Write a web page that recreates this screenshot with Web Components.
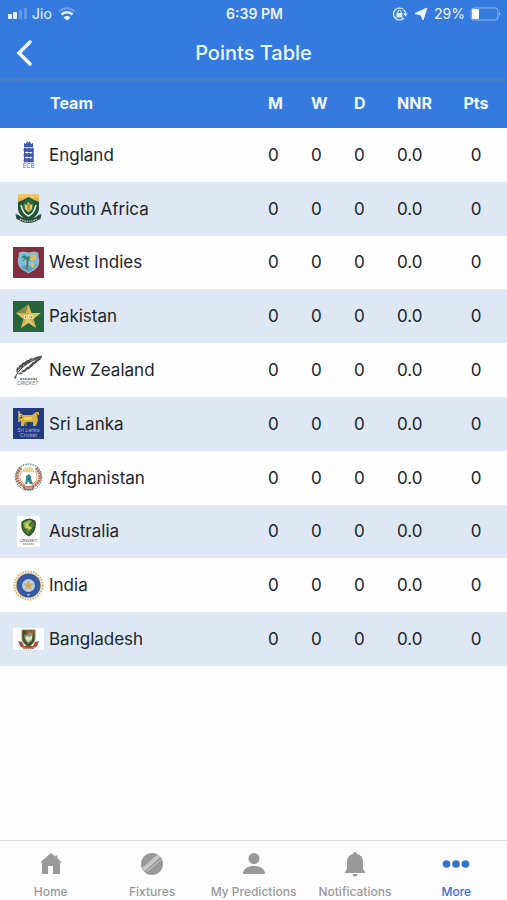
<!DOCTYPE html>
<html lang="en">
<head>
<meta charset="utf-8">
<meta name="viewport" content="width=device-width, initial-scale=1">
<title>Points Table</title>
<style>
  html, body {
    height: 100%;
    margin: 0;
  }

  body {
    font-family: Inter, "Liberation Sans", sans-serif;
    color: #20242b;
    background: #fefefe;
    --blue: #357bdf;
    --stripe: #dde8f4;
  }
</style>
</head>
<body>
<points-app></points-app>

<script>
// Team crests, all drawn in a 31 x 31 box
const crests = {
  england: `
    <g fill="#3f58a6">
      <path d="M11 4l2 1 1-3 1.500 2L17 2l1 3 2-1v4h-9z"/>
      <path d="M11 8h9.500v16H11z" opacity=".35"/>
      <path d="M11 9h2v14h-2zM14.500 9h2.500v14h-2.500zM18.500 9h2v14h-2z"/>
      <path d="M10.500 10.500l3-1 2 1 3-1 2 1v2l-3 .5-2-1-3 1-2-1zM10.500 15.500l3-1 2 1 3-1 2 1v2l-3 .5-2-1-3 1-2-1zM10.500 20.500l3-1 2 1 3-1 2 1v2l-3 .5-2-1-3 1-2-1z"/>
    </g>
    <path d="M12 13.500h7M12 18.500h7" stroke="#dfe5f5"/>
    <text x="15.700" y="29" font-size="6" text-anchor="middle" fill="#4f68b0">ECB</text>`,
  southAfrica: `
    <path d="M5 1h21v12c0 7-4 12-10.500 15C9 25 5 20 5 13z" fill="#e0b24e"/>
    <path d="M5 1h21v4H5z" fill="#eac56c"/>
    <path d="M5 9l5-2 5.500-3L21 7l5 2v6c0 6-5 10-10.500 13C10 25 5 21 5 15z" fill="#20553a"/>
    <path d="M8 12c2 8 4 9 7.500 11 3.500-2 5.500-3 7.500-11" fill="none" stroke="#eef0dc" stroke-width="1.500"/>
    <path d="M11 9l2-2 2.500-1 2.500 1 2 2 1 5-2 4-3.500 2-3.500-2-2-4z" fill="#2d6a3d"/>
    <path d="M11.500 11l2 1 2-3 2 3 2-1-.5 5-3.500 3-3.500-3z" fill="#e9ce72"/>
    <path d="M14 11h3v6h-3z" fill="#c4963a"/>
    <path d="M2.500 21l3 1c5 5 15 5 20 0l3-1-1 5-2.500 1c-5 4-14 4-19 0L3.500 26z" fill="#284b3a"/>
    <path d="M7 26c5 3 12 3 17 0" fill="none" stroke="#d8dfd3" stroke-width="1.200" stroke-dasharray="1.500 .8"/>`,
  westIndies: `
    <path d="M0 0h31v31H0z" fill="#842f3e"/>
    <path d="M6 6l4-1 5.500 1L21 5l4 1c-1 4 2 7 0 12-1 4-5 5-9.500 8C11 23 7 22 6 18c-2-5 1-8 0-12z" fill="#79bddd" stroke="#a9cddd" stroke-width=".8"/>
    <circle cx="20" cy="10.500" r="3" fill="#e7bd4e"/>
    <path d="M8 20l5-2 6 1 5-2-2 4-6.500 4-5.500-3z" fill="#4fa6c5"/>
    <path d="M14 11c1 4 1 7-.5 11" fill="none" stroke="#79603b" stroke-width="1.500"/>
    <path d="M14 10l-3-2-3 3 4-.5-3 4 4.500-3 4 3-2-4 3 .5-3-2z" fill="#287d62"/>
    <path d="M17 17l3-2 2 5-3 1z" fill="#d6c374"/>`,
  pakistan: `
    <path d="M0 0h31v31H0z" fill="#26643b"/>
    <path d="M15.500 3l3 9h9.500l-7.500 6L23 27l-7.500-5L8 27l2.500-9L3 12h9.500z" fill="#dfc467"/>
    <path d="M15.500 3v12L3 12zM15.500 15l5 3L23 27zM15.500 15L8 27l2.500-9z" fill="#c29f46" opacity=".65"/>
    <path d="M11 14h3v4h-3zM15 13l1.500 1V18h-2zM17.500 14h2.500v4h-2.500z" fill="#f3e5a5"/>
    <path d="M12.500 15v2M18.700 15v2" stroke="#997b37"/>`,
  newZealand: `
    <path d="M2 23C5 14 14 8 29 1" fill="none" stroke="#383a3c"/>
    <g fill="#4a4c4e">
      <path d="M29 1C24 1 20 3 18 6zM20 3c-3 0-5 2-6 5l2 0zM16 5c-3 0-5 2-5 5l2 0zM12 7c-3 0-4 3-4 6l2-1zM9 9c-3 1-4 3-4 6l2-1zM5 12c-2 1-2 4-1 6l1-2z"/>
      <path d="M29 1c-1 4-4 6-8 6l2-2.500zM25 6c-2 3-5 4-8 4l3-3zM21 9c-1 3-4 4-7 4l3-3zM18 12c-2 3-5 3-7 3l3-3zM14 15c-2 2-4 3-6 2l2-2zM10 18c-2 2-4 1-5 1l2-1.500z"/>
      <path d="M2 21h1.500l-1 3H1.500z"/>
    </g>
    <path d="M7 24h17" stroke="#8b8d90" stroke-width="2" stroke-dasharray="2 .6"/>
    <text x="4" y="30" font-size="5" font-style="italic" fill="#75777a">CRICKET</text>`,
  sriLanka: `
    <path d="M0 0h31v31H0z" fill="#233b80"/>
    <path d="M9 7h10l4-3h3v3h-2l1 5-2 6h-3v-4h-8l-1 4H8v-4L6 11l3-1z" fill="#d7b141"/>
    <path d="M6 3v11M9 7c-2-2-3 0-1 2" fill="none" stroke="#e2cf72" stroke-width="1.300"/>
    <path d="M11 9h8v3h-8z" fill="#efd05c"/>
    <path d="M13 14v4M23 6h2" stroke="#a17d2f" stroke-width="1.500"/>
    <g font-size="5" text-anchor="middle" fill="#a9b7e2"><text x="15.500" y="24">Sri Lanka</text><text x="15.500" y="29">Cricket</text></g>`,
  afghanistan: `
    <circle cx="15.500" cy="15" r="13" fill="none" stroke="#4f8f91" stroke-width="1.500" stroke-dasharray="1.500 1"/>
    <circle cx="15.500" cy="16" r="12" fill="#fefefe"/>
    <path d="M8 6c-7 8-4 16 5 19M23 6c7 8 4 16-5 19" fill="none" stroke="#b66a4e" stroke-width="3" stroke-dasharray="2 .6"/>
    <path d="M9 9c-4 6-2 11 3 13M22 9c4 6 2 11-3 13" fill="none" stroke="#d8a46e"/>
    <path d="M10 8l2-2 3.500-1L19 6l2 2v2H10z" fill="#efd38b"/>
    <path d="M13 14l3-2 2 2v3l2 5h-3l-2-3-1 3h-2l1-5z" fill="#368f86"/>
    <path d="M15 15l2 1-1 3z" fill="#2d5f99"/>
    <path d="M10 25l5.500-1 5.500 1-1 3h-9z" fill="#9c624c"/>
    <path d="M12 26h7" stroke="#f5dfcf"/>`,
  australia: `
    <path d="M4 0h23v31H4z" fill="#fdfefb"/>
    <path d="M9 6l3-2 5-1 5 2c1 7-1 12-6 15-5-2-8-7-7-14z" fill="#385f2f"/>
    <path d="M10 7l6-3 3 1-7 8z" fill="#92b74b"/>
    <path d="M12 15l8-9 1 3-6 9z" fill="#598639"/>
    <path d="M13 8l2-1 1 3 3 2-3 2-2-2-2 1z" fill="#d5cf62"/>
    <path d="M9 6l3-2 5-1 5 2c1 7-1 12-6 15-5-2-8-7-7-14z" fill="none" stroke="#294427"/>
    <text x="15.500" y="26" font-size="4" text-anchor="middle" fill="#30352f">CRICKET</text>
    <path d="M10 28h11" stroke="#686d66" stroke-width="1.200" stroke-dasharray="1.500 .5"/>`,
  india: `
    <circle cx="15.500" cy="15.500" r="14" fill="none" stroke="#d7ad60" stroke-width="2" stroke-dasharray="1.500 1.200"/>
    <circle cx="15.500" cy="15.500" r="13" fill="#ead9a6"/>
    <circle cx="15.500" cy="15.500" r="12" fill="#3558a0"/>
    <circle cx="15.500" cy="15.500" r="9.500" fill="none" stroke="#5976af" stroke-dasharray="1 1.500"/>
    <circle cx="15.500" cy="15.500" r="6.500" fill="#b7d0e6"/>
    <path d="M15.500 10l1.400 3.500 3.800.2-2.900 2.500.9 3.700-3.200-2-3.200 2 .9-3.700-2.900-2.500 3.800-.2z" fill="#cfa960"/>
    <path d="M14 24h3l-1.500 2z" fill="#c8d6ec"/>`,
  bangladesh: `
    <path d="M0 4h31v22H0z" fill="#fbfdfc"/>
    <path d="M9 6h13v8c0 4-3 7-6.500 9C12 21 9 18 9 14z" fill="#374e37" stroke="#a98448"/>
    <path d="M13 7h8v3h-8z" fill="#b84b3c"/>
    <path d="M11 11l4-1 2-2 3 2-1 7-4 3-3-4z" fill="#82946b"/>
    <path d="M12 14l2-2 3 1 2-2v4l-4 3z" fill="#e0dfc3"/>
    <path d="M5 17l4 1 2 4h9l2-4 4-1-2 5-4 3h-9l-4-3z" fill="#a14f35"/>
    <path d="M9 23c4 2 9 2 13 0" fill="none" stroke="#e1bd87" stroke-dasharray="1.500 .8"/>`
};

const teams = [
  ['england', 'England'],
  ['southAfrica', 'South Africa'],
  ['westIndies', 'West Indies'],
  ['pakistan', 'Pakistan'],
  ['newZealand', 'New Zealand'],
  ['sriLanka', 'Sri Lanka'],
  ['afghanistan', 'Afghanistan'],
  ['australia', 'Australia'],
  ['india', 'India'],
  ['bangladesh', 'Bangladesh']
].map(([crest, name]) => ({ crest, name, m: 0, w: 0, d: 0, nnr: '0.0', pts: 0 }));

const tabIcons = {
  home: '<path d="M12 1L1 10.500h2V22h6v-8h5v8h7V10.500h2L18.500 6.500V3.500h-2v1.300z"/>',
  fixtures: '<circle cx="12" cy="12" r="11"/><path d="M2 16L17.500 2.500l3 2.500L5 19z" fill="#c5c5c5"/><path d="M3.500 17.500L19 4M6.500 20L21.500 7" fill="none" stroke="#d0d0d0"/>',
  predictions: '<circle cx="12" cy="6.500" r="5.500"/><path d="M1 22c0-5.500 5-8 11-8s11 2.500 11 8z"/>',
  notifications: '<path d="M12 0a2 2 0 0 0-2 2c-4 1-6 4-6 8v7l-2 3v1h20v-1l-2-3v-7c0-4-2-7-6-8a2 2 0 0 0-2-2zM9.500 22h5a2.500 2.500 0 0 1-5 0z"/>',
  more: '<circle cx="2.500" cy="12" r="3.800"/><circle cx="12" cy="12" r="3.800"/><circle cx="21.500" cy="12" r="3.800"/>'
};

class StatusBar extends HTMLElement {
  connectedCallback() {
    this.attachShadow({ mode: 'open' });
    this.shadowRoot.innerHTML = `
      <style>
        :host {
          display: grid;
          grid-template-columns: 1fr auto 1fr;
          align-items: center;
          height: 27px;
          padding: 0 6px 0 8px;
          color: #e9f4ff;
          font-size: 14px;
        }

        div {
          display: flex;
          align-items: center;
          gap: 5px;
        }

        .right {
          justify-content: flex-end;
        }

        .time {
          font-weight: 600;
        }

        svg {
          display: block;
          fill: currentColor;
        }
      </style>
      <div>
        <svg width="19" height="12" viewBox="0 0 19 12" aria-hidden="true">
          <rect y="6" width="4" height="5" rx="1"/><rect x="5" y="4" width="4" height="7" rx="1"/>
          <path d="M11 2h3v9h-3zM16 0h3v11h-3z" opacity=".25"/>
        </svg>
        <span>Jio</span>
        <svg width="20" height="14" viewBox="0 0 20 14" aria-hidden="true">
          <path d="M2 4.500c5-4 11-4 16 0" fill="none" stroke="currentColor" stroke-width="2" opacity=".3"/>
          <path d="M4.500 7.500c3-3 8-3 11 0" fill="none" stroke="currentColor" stroke-width="2.500"/>
          <path d="M6.500 10.500c2-2 5-2 7 0l-3.500 3z"/>
        </svg>
      </div>
      <span class="time">6:39 PM</span>
      <div class="right">
        <svg width="16" height="14" viewBox="0 0 16 14" aria-hidden="true">
          <path d="M11.500 2.500A6 6 0 1 0 12 11M12 3a6 6 0 0 1 1.500 4" fill="none" stroke="currentColor" stroke-width="1.200"/>
          <path d="M11.500 6.500h4l-2 3z"/>
          <path d="M4.500 6h6v4.500h-6z"/>
          <path d="M5.800 6V5a1.700 1.700 0 0 1 3.400 0v1" fill="none" stroke="currentColor"/>
        </svg>
        <svg width="16" height="14" viewBox="0 0 16 14" aria-hidden="true"><path d="M14 1L10 13 8 8 2 6.500z" stroke="currentColor" stroke-linejoin="round"/></svg>
        <span>29%</span>
        <svg width="31" height="14" viewBox="0 0 31 14" aria-hidden="true">
          <rect x="1" y="1" width="27" height="12" rx="3" fill="none" stroke="currentColor" opacity=".5"/>
          <rect x="2" y="2" width="7" height="10" rx="1" fill="#fff"/>
          <path d="M29 5c2 1 2 3 0 4z" opacity=".5"/>
        </svg>
      </div>
    `;
  }
}

class NavHeader extends HTMLElement {
  connectedCallback() {
    this.attachShadow({ mode: 'open' });
    this.shadowRoot.innerHTML = `
      <style>
        :host {
          display: grid;
          grid-template-columns: 48px 1fr 48px;
          align-items: center;
          height: 51px;
          border-bottom: 3px solid #467fc9;
          color: #edf8ff;
        }

        button {
          display: flex;
          align-items: center;
          justify-content: center;
          height: 44px;
          padding: 0;
          border: 0;
          background: none;
          color: #f4fbff;
          cursor: pointer;
        }

        h1 {
          margin: 0;
          font-size: 20px;
          font-weight: 500;
          line-height: 24px;
          text-align: center;
        }
      </style>
      <button type="button" aria-label="Back">
        <svg width="18" height="28" viewBox="0 0 18 28" aria-hidden="true">
          <path d="M15 3L4 14l11 11" fill="none" stroke="currentColor" stroke-width="3.500" stroke-linecap="round"/>
        </svg>
      </button>
      <h1><slot></slot></h1>
    `;
  }
}

class TeamCrest extends HTMLElement {
  connectedCallback() {
    this.attachShadow({ mode: 'open' });
    this.shadowRoot.innerHTML = `
      <style>
        :host {
          display: block;
          flex: none;
          width: 31px;
          height: 31px;
        }

        svg {
          display: block;
          font-family: Inter, sans-serif;
        }
      </style>
      <svg width="31" height="31" viewBox="0 0 31 31" aria-hidden="true">${crests[this.getAttribute('team')]}</svg>
    `;
  }
}

class StandingsTable extends HTMLElement {
  connectedCallback() {
    this.attachShadow({ mode: 'open' });
    this.shadowRoot.innerHTML = `
      <style>
        :host {
          display: block;
        }

        table {
          width: 100%;
          height: 585px;
          table-layout: fixed;
          border-collapse: collapse;
          font-size: 17px;
        }

        col.num {
          width: 43px;
        }

        col.rate {
          width: 48px;
        }

        col.pts {
          width: 62px;
        }

        thead tr {
          height: 47px;
          background: var(--blue);
          color: #edf7ff;
          font-size: 16px;
        }

        th, td {
          padding: 0;
          text-align: left;
          font-weight: 400;
        }

        thead th {
          padding-bottom: 3px;
          font-weight: 700;
        }

        thead th:first-child {
          padding-left: 50px;
        }

        th:last-child, td:last-child {
          text-align: center;
        }

        tbody tr:nth-child(even) {
          background: var(--stripe);
        }

        .team {
          display: flex;
          align-items: center;
          gap: 5px;
          padding-left: 13px;
        }
      </style>
      <table>
        <colgroup>
          <col><col class="num"><col class="num"><col class="num"><col class="rate"><col class="pts">
        </colgroup>
        <thead>
          <tr>
            <th scope="col">Team</th>
            <th scope="col">M</th>
            <th scope="col">W</th>
            <th scope="col">D</th>
            <th scope="col">NNR</th>
            <th scope="col">Pts</th>
          </tr>
        </thead>
        <tbody>
          ${teams.map(t => `
            <tr>
              <th scope="row"><div class="team"><team-crest team="${t.crest}"></team-crest><span>${t.name}</span></div></th>
              <td>${t.m}</td>
              <td>${t.w}</td>
              <td>${t.d}</td>
              <td>${t.nnr}</td>
              <td>${t.pts}</td>
            </tr>`).join('')}
        </tbody>
      </table>
    `;
  }
}

class TabItem extends HTMLElement {
  connectedCallback() {
    this.attachShadow({ mode: 'open' });
    this.shadowRoot.innerHTML = `
      <style>
        :host {
          display: block;
          flex: 1 1 0;
          min-width: 0;
          color: #999;
        }

        :host([active]) {
          color: #3572cc;
        }

        a {
          display: flex;
          flex-direction: column;
          align-items: center;
          gap: 8px;
          padding-top: 11px;
          color: inherit;
          font-size: 12px;
          font-weight: 500;
          line-height: 16px;
          white-space: nowrap;
          text-decoration: none;
        }

        svg {
          display: block;
          overflow: visible;
          fill: currentColor;
        }
      </style>
      <a href="#${this.getAttribute('icon')}">
        <svg width="24" height="24" viewBox="0 0 24 24" aria-hidden="true">${tabIcons[this.getAttribute('icon')]}</svg>
        <span><slot></slot></span>
      </a>
    `;
  }
}

class TabBar extends HTMLElement {
  connectedCallback() {
    this.attachShadow({ mode: 'open' });
    this.shadowRoot.innerHTML = `
      <style>
        nav {
          display: flex;
          height: 59px;
          border-top: 1px solid #d9d9d9;
          background: #fdfdfd;
        }
      </style>
      <nav><slot></slot></nav>
    `;
  }
}

class PointsApp extends HTMLElement {
  connectedCallback() {
    this.attachShadow({ mode: 'open' });
    this.shadowRoot.innerHTML = `
      <style>
        :host {
          display: flex;
          flex-direction: column;
          min-height: 100%;
        }

        header {
          background: var(--blue);
        }

        main {
          flex: 1;
        }
      </style>
      <header>
        <status-bar></status-bar>
        <nav-header>Points Table</nav-header>
      </header>
      <main><standings-table></standings-table></main>
      <tab-bar>
        <tab-item icon="home">Home</tab-item>
        <tab-item icon="fixtures">Fixtures</tab-item>
        <tab-item icon="predictions">My Predictions</tab-item>
        <tab-item icon="notifications">Notifications</tab-item>
        <tab-item icon="more" active>More</tab-item>
      </tab-bar>
    `;
  }
}

customElements.define('status-bar', StatusBar);
customElements.define('nav-header', NavHeader);
customElements.define('team-crest', TeamCrest);
customElements.define('standings-table', StandingsTable);
customElements.define('tab-item', TabItem);
customElements.define('tab-bar', TabBar);
customElements.define('points-app', PointsApp);
</script>
</body>
</html>
